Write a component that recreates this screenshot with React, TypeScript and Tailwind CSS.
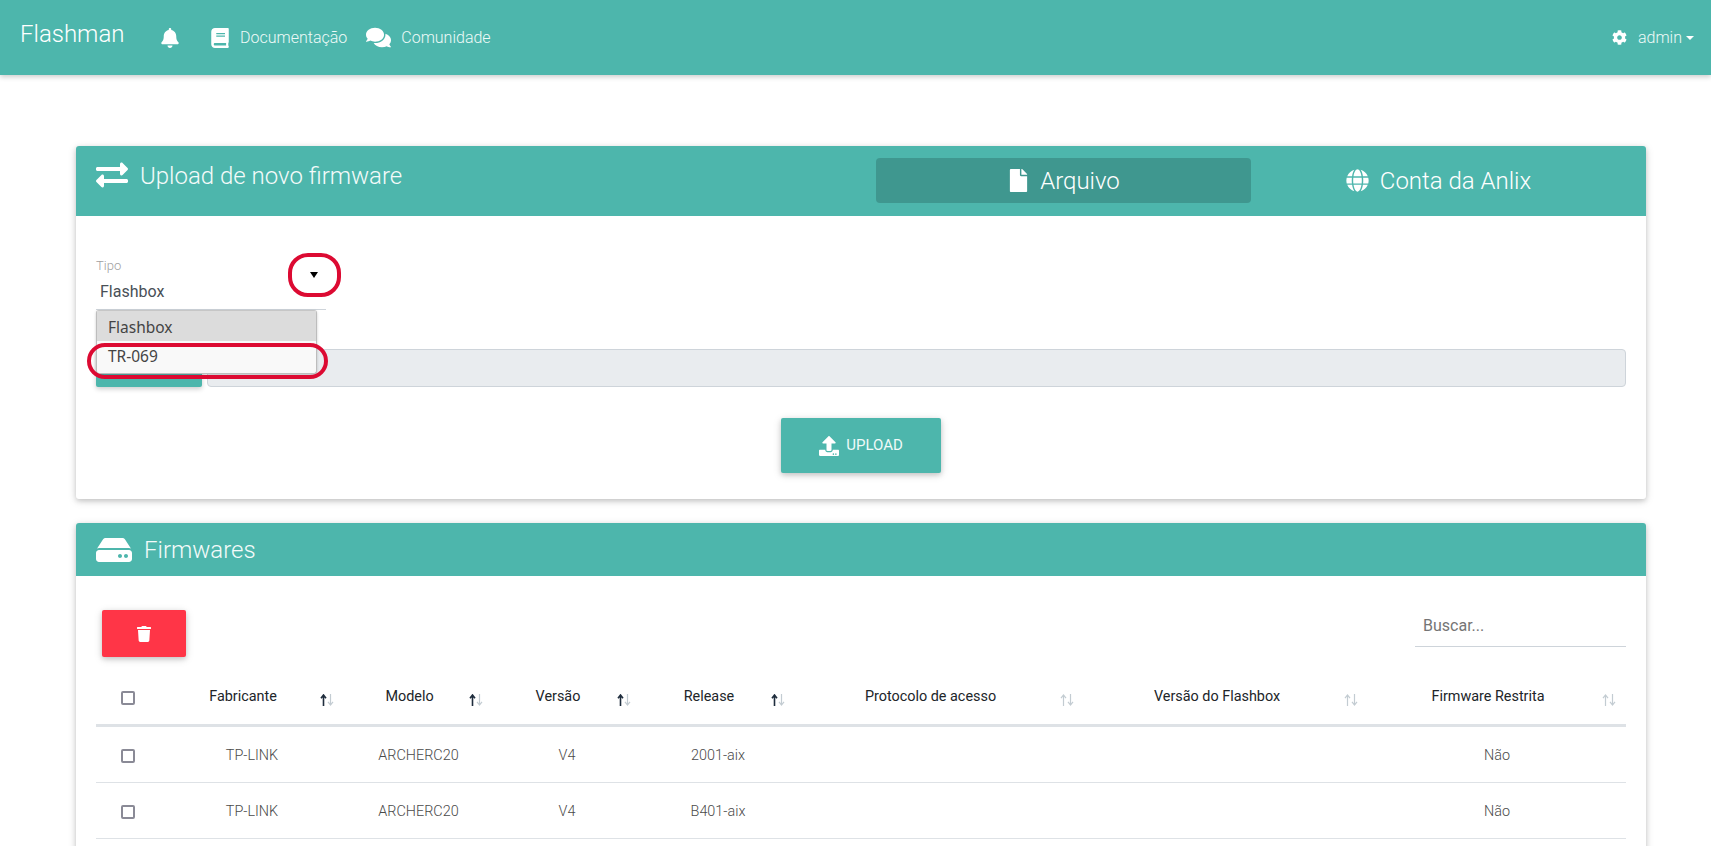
import { FaBell, FaBook, FaComments, FaExchangeAlt, FaFile, FaGlobe, FaHdd, FaTrash, FaCog, FaUpload } from "react-icons/fa";

function Sort({ active }: { active?: boolean }) {
  return (
    <svg width="14" height="12" viewBox="0 0 14 12" className="absolute right-[10px] top-[24px]">
      <path d="M3.5 12V2M1 4.2 3.5 1 6 4.2" fill="none" stroke={active ? "#1f2d3d" : "#c3ccd2"} strokeWidth={active ? 1.6 : 1.2} />
      <path d="M10.5 0v10M8 7.8 10.5 11 13 7.8" fill="none" stroke="#c3ccd2" strokeWidth="1.2" />
    </svg>
  );
}

function Box() {
  return <span className="inline-block w-[14px] h-[14px] border-2 border-[#8a8a96] rounded-[2px] align-middle" />;
}

const heads: [string, boolean][] = [
  ["Fabricante", true],
  ["Modelo", true],
  ["Versão", true],
  ["Release", true],
  ["Protocolo de acesso", false],
  ["Versão do Flashbox", false],
  ["Firmware Restrita", false],
];

const rows = [
  ["TP-LINK", "ARCHERC20", "V4", "2001-aix"],
  ["TP-LINK", "ARCHERC20", "V4", "B401-aix"],
];

export default function App() {
  return (
    <div className="h-[846px] overflow-hidden bg-white font-['Roboto',sans-serif] text-[#212529]">
      <nav className="h-[75px] bg-[#4db6ac] flex items-center pl-[20px] pr-[17px] text-white shadow-[0_2px_5px_rgba(0,0,0,0.2)] relative z-10">
        <span className="text-[24px] font-light leading-none mb-[7px] w-[102px]">Flashman</span>
        <FaBell className="ml-[38px] text-[20px]" />
        <FaBook className="ml-[30px] text-[20px]" />
        <span className="ml-[10px] font-light text-[16px] text-[#eefaf8]">Documentação</span>
        <FaComments className="ml-[19px] text-[25px]" />
        <span className="ml-[10px] font-light text-[16px] text-[#eefaf8]">Comunidade</span>
        <div className="ml-auto flex items-center">
          <FaCog className="text-[15px]" />
          <span className="ml-[11px] font-light text-[16px] text-[#eefaf8]">admin</span>
          <span className="ml-[4px] w-0 h-0 border-x-[4px] border-x-transparent border-t-[4px] border-t-white" />
        </div>
      </nav>

      <main className="ml-[76px] mr-[65px] pt-[71px] flex flex-col gap-[24px]">
        <section className="h-[353px] rounded-[3px] bg-white shadow-[0_2px_5px_rgba(0,0,0,0.16),0_2px_10px_rgba(0,0,0,0.12)]">
          <header className="h-[70px] bg-[#4db6ac] rounded-t-[3px] flex items-start pl-[20px] pr-[20px] text-white">
            <FaExchangeAlt className="text-[32px] mt-[13px]" />
            <h1 className="ml-[12px] mt-[14px] text-[24px] font-light leading-[32px] text-[#f4fbfa]">Upload de novo firmware</h1>
            <div className="ml-auto flex mt-[12px]">
              <div className="w-[375px] h-[45px] rounded-[4px] bg-[#3f978f] flex items-center justify-center gap-[10px]">
                <FaFile className="text-[23px]" />
                <span className="text-[24px] font-light">Arquivo</span>
              </div>
              <div className="w-[375px] h-[45px] flex items-center justify-center gap-[11px]">
                <FaGlobe className="text-[23px]" />
                <span className="text-[24px] font-light">Conta da Anlix</span>
              </div>
            </div>
          </header>

          <div className="relative px-[20px]">
            <div className="relative w-[230px] h-[54px] mt-[40px] border-b border-[#ced4da]">
              <label className="absolute left-0 top-[2px] text-[13px] leading-[16px] text-[#a0a0a0] font-light">Tipo</label>
              <span className="absolute left-[4px] top-[24px] text-[16px] leading-[24px] text-[#495057]">Flashbox</span>
              <span className="absolute left-[214px] top-[16px] w-0 h-0 border-x-[4px] border-x-transparent border-t-[6px] border-t-black" />
              <div className="absolute left-0 top-[54px] w-[221px] h-[64px] z-20 rounded-[3px] border border-[#bdbdbd] border-t-[#c6c6c6] bg-[#f9f9f9] font-['Noto_Sans',sans-serif] text-[15.5px] text-[#444] shadow-[0_1px_3px_rgba(0,0,0,0.2)]">
                <div className="h-[30px] bg-[#dcdcdc] pl-[11px] leading-[33px]">Flashbox</div>
                <div className="pl-[11px] leading-[31px]">TR-069</div>
              </div>
              <span className="absolute left-[192px] top-[-3px] w-[53px] h-[44px] rounded-[20px] border-[4px] border-[#dc0a32]" />
              <span className="absolute left-[-9px] top-[87px] w-[241px] h-[36px] rounded-[18px] border-[4px] border-[#dc0a32] z-30" />
            </div>

            <div className="flex gap-[5px] mt-[39px] items-end">
              <div className="w-[106px] h-[38px] rounded-[2px] bg-[#4db6ac] shadow-[0_2px_5px_rgba(0,0,0,0.2)]" />
              <div className="flex-1 h-[38px] bg-[#e9ecef] border border-[#ced4da] rounded-[4px]" />
            </div>

            <div className="flex justify-center mt-[31px]">
              <button className="w-[160px] h-[55px] rounded-[2px] bg-[#4db6ac] text-white text-[15px] flex items-center justify-center gap-[7px] shadow-[0_2px_5px_rgba(0,0,0,0.16),0_2px_10px_rgba(0,0,0,0.12)]">
                <FaUpload className="text-[20px]" />
                <span className="font-normal text-[#f0faf9]">UPLOAD</span>
              </button>
            </div>
          </div>
        </section>

        <section className="h-[400px] rounded-[3px] bg-white shadow-[0_2px_5px_rgba(0,0,0,0.16),0_2px_10px_rgba(0,0,0,0.12)]">
          <header className="h-[53px] bg-[#4db6ac] rounded-t-[3px] flex items-center pl-[20px] text-white">
            <FaHdd className="text-[36px]" />
            <h2 className="ml-[12px] text-[24px] font-light text-[#f4fbfa]">Firmwares</h2>
          </header>
          <div className="px-[20px]">
            <div className="flex justify-between items-start pt-[34px]">
              <button className="ml-[6px] w-[84px] h-[47px] rounded-[2px] bg-[#ff3547] text-white flex items-center justify-center shadow-[0_2px_5px_rgba(0,0,0,0.16),0_2px_10px_rgba(0,0,0,0.12)]">
                <FaTrash className="text-[16px]" />
              </button>
              <div className="w-[211px] h-[37px] border-b border-[#ced4da] pl-[8px] text-[16px] leading-[32px] text-[#757575]">Buscar...</div>
            </div>
            <table className="w-[1530px] table-fixed border-collapse mt-[13px]">
              <colgroup>
                <col className="w-[64px]" />
                <col className="w-[184px]" />
                <col className="w-[149px]" />
                <col className="w-[148px]" />
                <col className="w-[154px]" />
                <col className="w-[289px]" />
                <col className="w-[284px]" />
                <col className="w-[258px]" />
              </colgroup>
              <thead>
                <tr className="h-[55px] border-b-[3px] border-[#dee2e6]">
                  <th className="text-center"><Box /></th>
                  {heads.map(([h, a]) => (
                    <th key={h} className="relative pl-[10px] pr-[28px] text-center text-[14.4px] font-normal text-[#212529] align-middle">
                      {h}
                      <Sort active={a} />
                    </th>
                  ))}
                </tr>
              </thead>
              <tbody className="text-[14.4px] font-light text-[#4a4a4a]">
                {rows.map((r, i) => (
                  <tr key={i} className={i === 0 ? "h-[57px] border-b border-[#dee2e6] text-center" : "h-[56px] border-b border-[#dee2e6] text-center"}>
                    <td className="pt-[3px]"><Box /></td>
                    {r.map((c, j) => <td key={j} className="pt-[4px]">{c}</td>)}
                    <td />
                    <td />
                    <td className="pt-[4px]">Não</td>
                  </tr>
                ))}
              </tbody>
            </table>
          </div>
        </section>
      </main>
    </div>
  );
}
